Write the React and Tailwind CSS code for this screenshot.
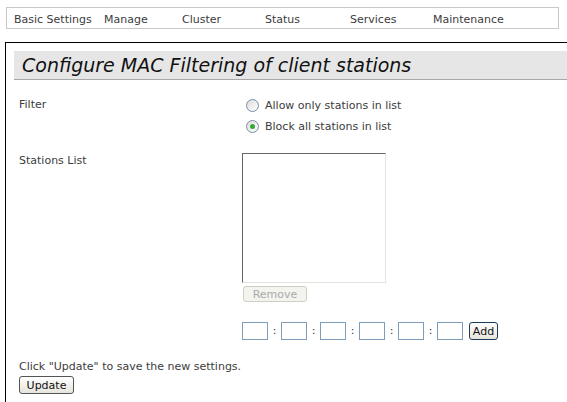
import React from 'react';

const navItems = [
    { label: 'Basic Settings', w: 'w-[90px]' },
    { label: 'Manage', w: 'w-[78px]' },
    { label: 'Cluster', w: 'w-[83px]' },
    { label: 'Status', w: 'w-[85px]' },
    { label: 'Services', w: 'w-[83px]' },
    { label: 'Maintenance', w: 'w-[110px]' },
];

function Radio({ checked, label }) {
    return (
        <label className="flex items-center h-[21px] gap-[6px]">
            <span className="w-[13px] h-[13px] rounded-full border border-[#7a8ea8] bg-gradient-to-br from-[#dcdcdc] to-white flex items-center justify-center">
                {checked && <span className="w-[5px] h-[5px] rounded-full bg-[#3aa53a]" />}
            </span>
            <span>{label}</span>
        </label>
    );
}

function MacField() {
    return <span className="block w-[26px] h-[18px] border border-[#7f9db9] bg-white" />;
}

export default function App() {
    return (
        <div className="w-[567px] h-[402px] overflow-hidden bg-white text-[#3c3c3c] text-[11px] leading-[14px]" style={{ fontFamily: '"DejaVu Sans", Verdana, sans-serif' }}>
            <div className="pt-[7px] pl-[6px]">
                <div className="w-[553px] h-[22px] border border-[#c8c8c8] flex items-center pl-[7px] pt-[3px]">
                    {navItems.map(item => (
                        <div key={item.label} className={`${item.w} shrink-0 whitespace-nowrap`}>{item.label}</div>
                    ))}
                </div>
            </div>

            <div className="mt-[13px] ml-[5px] border-t border-l border-black pt-[8px] h-[400px]">
                <div className="ml-[8px] h-[29px] bg-[#e6e6e6] border-b border-[#a8a8a8] flex items-center pl-[8px]">
                    <h1 className="italic text-[19px] text-[#111] leading-none whitespace-nowrap">Configure MAC Filtering of client stations</h1>
                </div>

                <div className="pl-[13px]">
                    <div className="flex mt-[15px]">
                        <div className="w-[223px] pt-[3px]">Filter</div>
                        <div className="pl-[4px]">
                            <Radio label="Allow only stations in list" />
                            <Radio checked label="Block all stations in list" />
                        </div>
                    </div>

                    <div className="flex mt-[16px]">
                        <div className="w-[223px] pt-[1px]">Stations List</div>
                        <div>
                            <div className="w-[144px] h-[130px] bg-white border border-t-[#666] border-l-[#666] border-r-[#e4e4dc] border-b-[#e4e4dc]" />
                            <button disabled className="mt-[3px] ml-[1px] w-[64px] h-[16px] rounded-[3px] border border-[#cfcfc4] bg-[#f4f4ee] text-[#aaa] text-[11px] leading-none">Remove</button>
                            <div className="mt-[20px] flex items-center">
                                {[0, 1, 2, 3, 4].map(i => (
                                    <React.Fragment key={i}>
                                        <MacField />
                                        <span className="w-[13px] text-center text-[#333]">:</span>
                                    </React.Fragment>
                                ))}
                                <MacField />
                                <button className="ml-[6px] w-[29px] h-[18px] rounded-[3px] border border-[#1c3a5c] bg-gradient-to-b from-white to-[#e6e4dc] text-[#111] text-[11px] leading-none">Add</button>
                            </div>
                        </div>
                    </div>

                    <div className="mt-[20px]">Click "Update" to save the new settings.</div>
                    <button className="mt-[2px] w-[55px] h-[18px] rounded-[3px] border border-[#555] bg-gradient-to-b from-white to-[#e6e4dc] text-[#111] text-[11px] leading-none">Update</button>
                </div>
            </div>
        </div>
    );
}
